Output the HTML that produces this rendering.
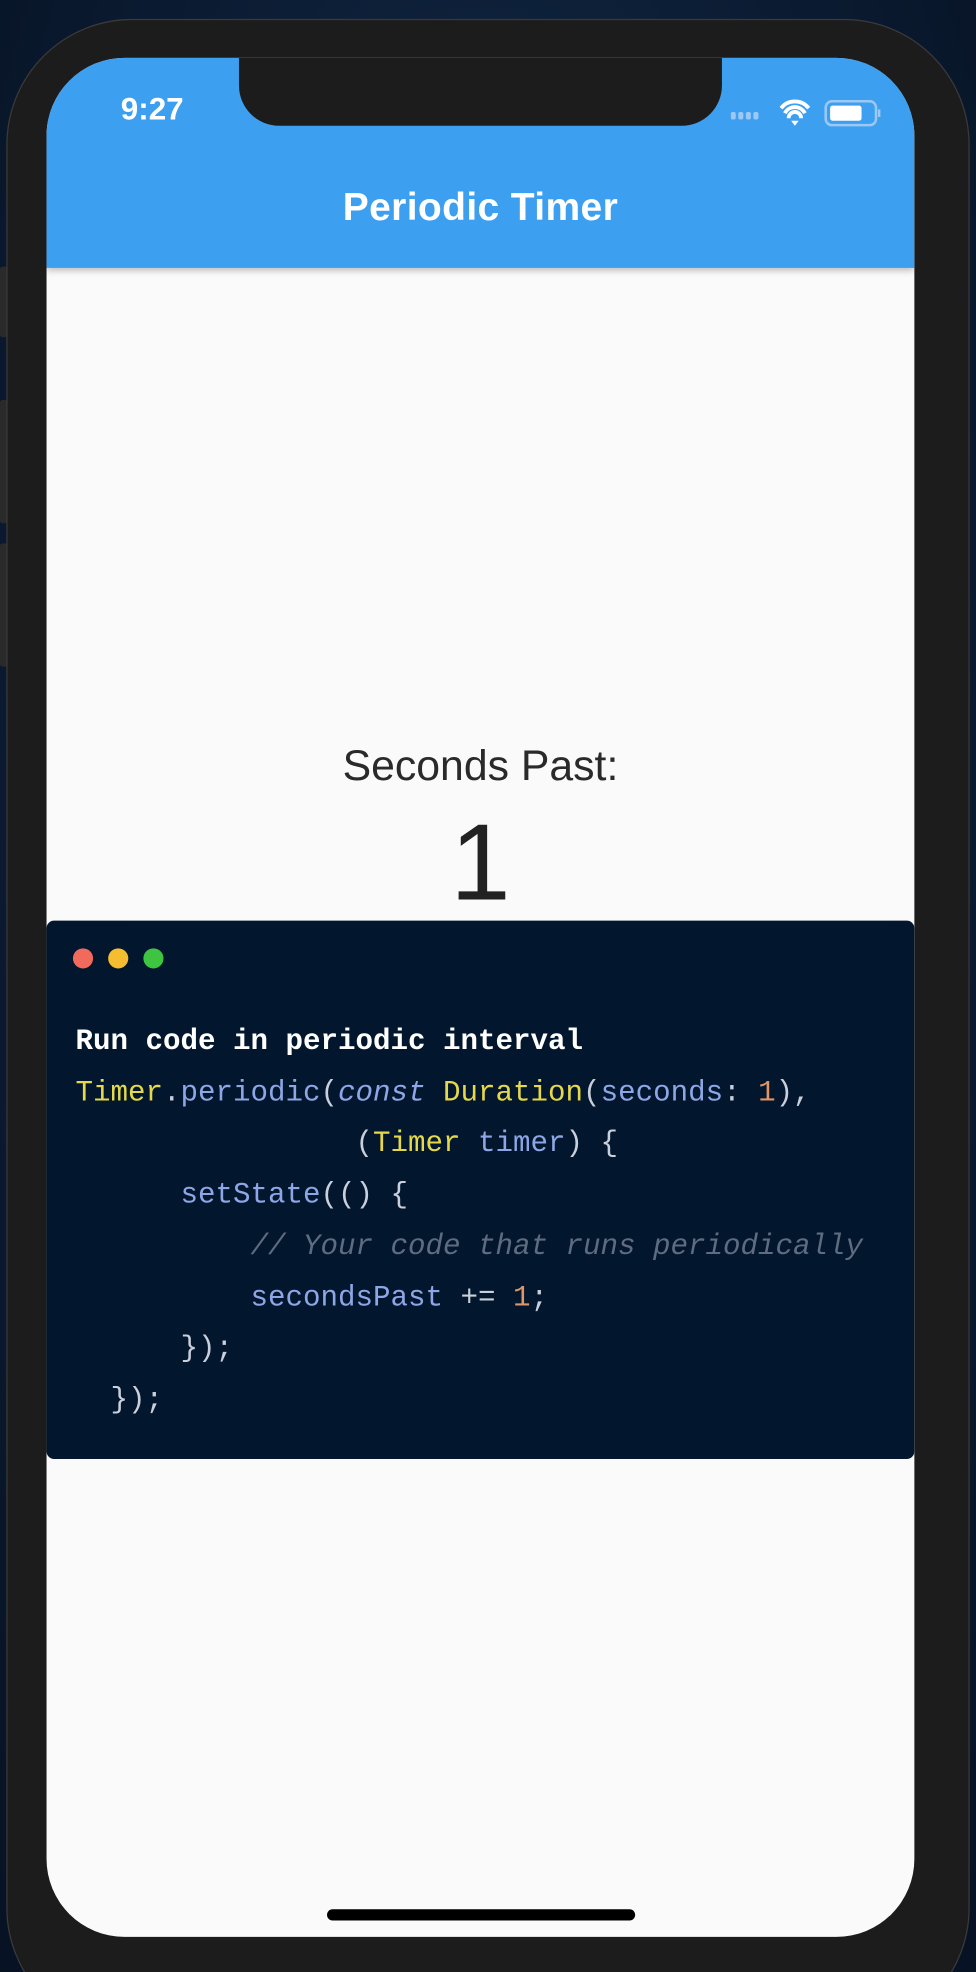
<!DOCTYPE html>
<html><head><meta charset="utf-8"><style>
html,body{margin:0;padding:0;width:976px;height:1972px;overflow:hidden;background:#0a1628;}
#w{position:absolute;left:0;top:0;width:776px;height:1568px;transform:scale(1.25773);transform-origin:0 0;
background:radial-gradient(ellipse at 50% 40%,#16314f 0%,#0b1c33 60%,#071223 100%);overflow:hidden;font-family:"Liberation Sans",sans-serif;}
.phone{position:absolute;left:5px;top:15px;width:764px;height:1600px;background:#1c1c1c;border-radius:100px;border:1px solid #3a3a3a;}
.btn{position:absolute;left:0;width:6px;background:#2a2a2a;border-radius:2px;}
.screen{position:absolute;left:37px;top:46px;width:690px;height:1494px;background:#fafafa;border-radius:62px;overflow:hidden;}
.bar{position:absolute;left:0;top:0;width:690px;height:167px;background:#3d9ff0;box-shadow:0 2px 5px rgba(0,0,0,.25);}
.notch{position:absolute;left:153px;top:0;width:384px;height:54px;background:#1c1c1c;border-radius:0 0 32px 32px;}
.time{position:absolute;left:59px;top:27px;color:#fff;font-size:25px;font-weight:bold;}
.title{position:absolute;left:0;width:690px;top:101px;text-align:center;color:#fff;font-size:31px;font-weight:bold;letter-spacing:0.3px;}
.sp{position:absolute;left:0;width:690px;top:544px;text-align:center;color:#2a2a2a;font-size:34px;}
.one{position:absolute;left:0;width:690px;top:591px;text-align:center;color:#222;font-size:86px;font-weight:300;}
.code{position:absolute;left:0;top:686px;width:690px;height:428px;background:#02172d;border-radius:6px;}
.dot{position:absolute;top:22px;width:16px;height:16px;border-radius:50%;}
pre{position:absolute;left:23px;top:76px;margin:0;font-family:"Liberation Mono",monospace;font-size:23.2px;line-height:40.7px;color:#c9cfdc;}
.y{color:#e5d84a}.b{color:#8ea6e6}.o{color:#de9568}.c{color:#5e6b80;font-style:italic}.w{color:#fff;font-weight:bold}
.home{position:absolute;left:223px;top:1472px;width:245px;height:9px;background:#000;border-radius:5px;}
</style></head><body><div id="w">
<div class="btn" style="top:212px;height:56px"></div>
<div class="btn" style="top:318px;height:98px"></div>
<div class="btn" style="top:432px;height:98px"></div>
<div class="phone"></div>
<div class="screen">
 <div class="bar">
  <div class="time">9:27</div>
  <svg style="position:absolute;left:544px;top:32px" width="120" height="24">
   <g fill="#9cc8f5"><rect x="0" y="11" width="4" height="6" rx="1.5"/><rect x="6" y="11" width="4" height="6" rx="1.5"/><rect x="12" y="11" width="4" height="6" rx="1.5"/><rect x="18" y="11" width="4" height="6" rx="1.5"/></g>
   <path d="M40 8 a14 14 0 0 1 22 0 M43 12 a9 9 0 0 1 16 0 M46 16 a4.5 4.5 0 0 1 10 0" stroke="#fff" stroke-width="3" fill="none"/>
   <path d="M51 22 l-3 -4 h6z" fill="#fff"/>
   <rect x="75.5" y="2.5" width="40" height="19" rx="5" fill="none" stroke="#9cc8f5" stroke-width="2"/>
   <rect x="79" y="6" width="25" height="12" rx="2" fill="#fff"/>
   <rect x="117" y="9" width="2" height="6" fill="#9cc8f5"/>
  </svg>
  <div class="title">Periodic Timer</div>
 </div>
 <div class="notch"></div>
 <div class="sp">Seconds Past:</div>
 <div class="one">1</div>
 <div class="code">
  <div class="dot" style="left:21px;background:#f26a5b"></div>
  <div class="dot" style="left:49px;background:#f5bd2f"></div>
  <div class="dot" style="left:77px;background:#3fc442"></div>
<pre><span class="w">Run code in periodic interval</span>
<span class="y">Timer</span>.<span class="b">periodic</span>(<span class="b" style="font-style:italic">const</span> <span class="y">Duration</span>(<span class="b">seconds</span>: <span class="o">1</span>),
                (<span class="y">Timer</span> <span class="b">timer</span>) {
      <span class="b">setState</span>(() {
          <span class="c">// Your code that runs periodically</span>
          <span class="b">secondsPast</span> += <span class="o">1</span>;
      });
  });</pre>
 </div>
 <div class="home"></div>
</div>
</div></body></html>
